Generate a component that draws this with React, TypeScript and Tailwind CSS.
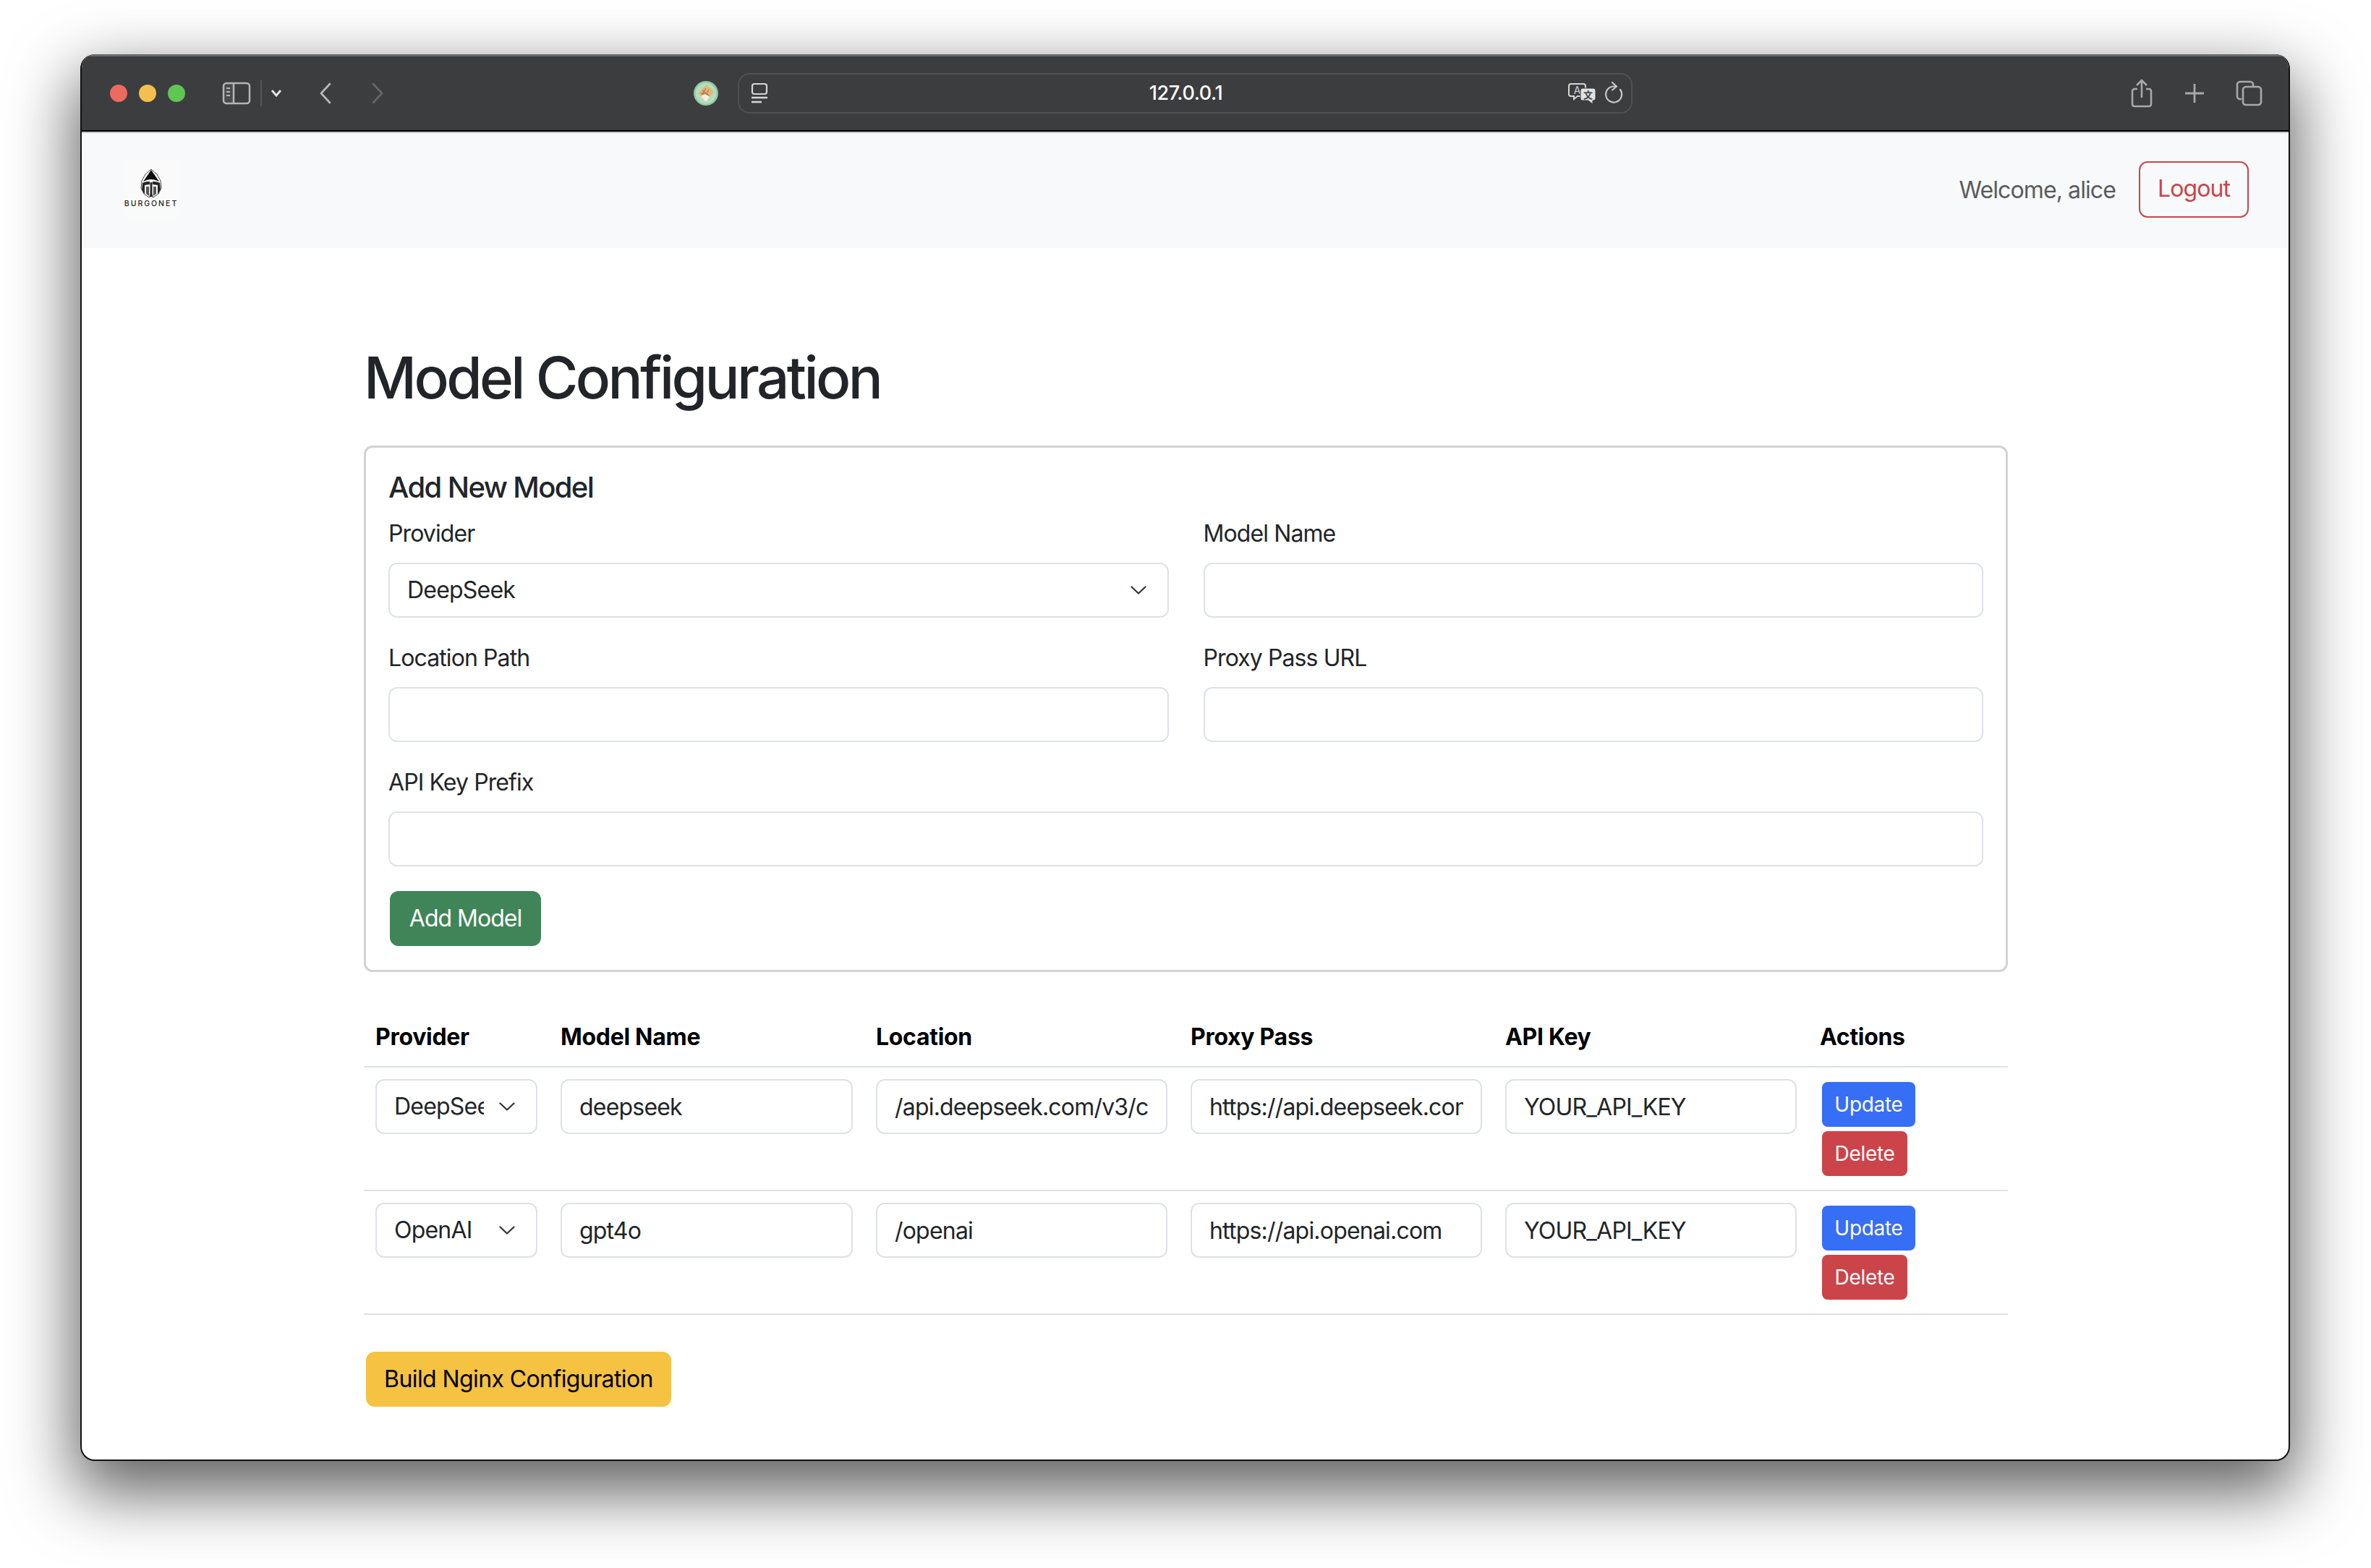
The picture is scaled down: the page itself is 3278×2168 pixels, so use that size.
const font = "font-['Inter','Liberation_Sans',sans-serif]";

function ToolbarIcons() {
  return (
    <>
      <svg width="42" height="34" viewBox="0 0 42 34" fill="none" className="ml-[50px]">
        <rect x="3" y="3" width="36" height="28" rx="4" stroke="#b5b5b6" strokeWidth="2.5" />
        <rect x="3" y="3" width="14" height="28" fill="#b5b5b6" fillOpacity="0.12" />
        <path d="M17 3v28" stroke="#b5b5b6" strokeWidth="2.5" />
        <path d="M7 10h5M7 15h5M7 20h5" stroke="#b5b5b6" strokeWidth="2" />
      </svg>
      <div className="ml-[12px] h-[36px] w-[2px] bg-[#55565a]" />
      <svg width="18" height="12" viewBox="0 0 18 12" fill="none" className="ml-[11px]">
        <path d="M3 2l6 7 6-7" stroke="#e4e4e4" strokeWidth="2.8" />
      </svg>
      <svg width="20" height="32" viewBox="0 0 20 32" fill="none" className="ml-[49px]">
        <path d="M16 3L4 16l12 13" stroke="#b9b9ba" strokeWidth="2.6" strokeLinecap="round" strokeLinejoin="round" />
      </svg>
      <svg width="20" height="32" viewBox="0 0 20 32" fill="none" className="ml-[52px]">
        <path d="M4 3l12 13L4 29" stroke="#66676a" strokeWidth="2.6" strokeLinecap="round" strokeLinejoin="round" />
      </svg>
    </>
  );
}

function Favicon() {
  return (
    <svg width="36" height="36" viewBox="0 0 36 36" className="ml-[426px] mr-[26px] shrink-0">
      <circle cx="18" cy="18" r="17" fill="#8fc9a0" />
      <circle cx="18" cy="18" r="14.500" fill="#b4dcbf" />
      <path d="M19 6l10 10-11 14L7 18z" fill="#e0b778" />
      <path d="M13 14l9 7M18 11l-5 9M22 13l-5 9M11 18l10 2" stroke="#a67f4d" strokeWidth="1.300" />
      <path d="M11 22l7 8 5-7-6-4z" fill="#f4efe3" />
    </svg>
  );
}

function UrlBar() {
  return (
    <div className="flex h-[56px] w-[1237px] shrink-0 items-center rounded-[16px] border-2 border-[#505154] pl-[15px] pr-[10px]">
      <svg width="26" height="30" viewBox="0 0 26 30" fill="none">
        <rect x="3" y="2" width="20" height="14" rx="3" stroke="#d6d6d6" strokeWidth="2.2" />
        <path d="M2 21h22" stroke="#d6d6d6" strokeWidth="2.4" />
        <path d="M2 27h14" stroke="#d6d6d6" strokeWidth="2.4" />
      </svg>
      <div className="flex-1 pl-[48px] pt-[2px] text-center text-[27px] font-medium tracking-[-0.4px] text-white">127.0.0.1</div>
      <svg width="40" height="30" viewBox="0 0 40 30" fill="none">
        <path d="M4 2h17a3 3 0 0 1 3 3v11a3 3 0 0 1-3 3H13l-5 4v-4H4a3 3 0 0 1-3-3V5a3 3 0 0 1 3-3z" stroke="#d6d6d6" strokeWidth="2" />
        <text x="12.500" y="15.500" textAnchor="middle" fontSize="14" fill="#d6d6d6">A</text>
        <path d="M20 8h15a3 3 0 0 1 3 3v11a3 3 0 0 1-3 3h-1v5l-6-5h-8a3 3 0 0 1-3-3V11a3 3 0 0 1 3-3z" fill="#e2e2e2" stroke="#3c3d3f" strokeWidth="1" />
        <text x="27.500" y="22" textAnchor="middle" fontSize="13" fontWeight="700" fill="#3c3d3f" fontFamily="'Noto Sans CJK SC', sans-serif">文</text>
      </svg>
      <svg width="30" height="32" viewBox="0 0 30 32" fill="none" className="ml-[7px]">
        <path d="M25 11a11 11 0 1 1-9-4.500h2" stroke="#c9c9c9" strokeWidth="2.200" strokeLinecap="round" />
        <path d="M14 1l6 5.500-6 5" stroke="#c9c9c9" strokeWidth="2.200" strokeLinecap="round" strokeLinejoin="round" />
      </svg>
    </div>
  );
}

function RightIcons() {
  return (
    <div className="ml-auto flex items-center pr-[36px]">
      <svg width="34" height="40" viewBox="0 0 34 40" fill="none">
        <path d="M11 14H7a3 3 0 0 0-3 3v18a3 3 0 0 0 3 3h20a3 3 0 0 0 3-3V17a3 3 0 0 0-3-3h-4" stroke="#a9a9aa" strokeWidth="2.6" />
        <path d="M17 26V3M10 9l7-7 7 7" stroke="#a9a9aa" strokeWidth="2.6" />
      </svg>
      <svg width="30" height="30" viewBox="0 0 30 30" fill="none" className="ml-[41px]">
        <path d="M15 2v26M2 15h26" stroke="#a9a9aa" strokeWidth="2.8" />
      </svg>
      <svg width="38" height="36" viewBox="0 0 38 36" fill="none" className="ml-[41px]">
        <path d="M9 26H7a4 4 0 0 1-4-4V6a4 4 0 0 1 4-4h14a4 4 0 0 1 4 4v2" stroke="#a9a9aa" strokeWidth="2.6" />
        <rect x="11" y="9" width="25" height="25" rx="4" stroke="#a9a9aa" strokeWidth="2.6" />
      </svg>
    </div>
  );
}

function Logo() {
  return (
    <div className="flex h-[78px] w-[80px] flex-col items-center bg-[#fafafa] pt-[10px]">
      <svg width="32" height="41" viewBox="0 0 32 41" className="shrink-0">
        <path d="M16 1l8 7 5 9 1 10-4 8-7 5-3-2-3 2-7-5-4-8 1-10 5-9z" fill="none" stroke="#333" strokeWidth="0.900" />
        <path d="M16 2L5 18c4-2 7-3 11-3s7 1 11 3z" fill="#0c0c0c" />
        <path d="M4 20c4-2 7-2 10-2v4L7 23v13l-4-7zM28 20c-4-2-7-2-10-2v4l7 1v13l4-7z" fill="#262626" />
        <path d="M9 25h4v13l-4-3zM23 25h-4v13l4-3z" fill="#555" />
        <path d="M14.500 19v16l-1 4h5l-1-4V19z" fill="#2a2a2a" />
      </svg>
      <div className="mt-[2px] text-[10.500px] font-medium leading-[12px] tracking-[2px] text-[#222]">BURGONET</div>
    </div>
  );
}

function Chevron({ className }: { className: string }) {
  return (
    <svg width="24" height="14" viewBox="0 0 24 14" fill="none" className={`pointer-events-none absolute ${className}`}>
      <path d="M2.500 2.500L12 11.500l9.500-9" stroke="#343a40" strokeWidth="2.400" strokeLinecap="round" strokeLinejoin="round" />
    </svg>
  );
}

function Field({ value = "" }: { value?: string }) {
  return (
    <input
      defaultValue={value}
      className="block h-[76px] w-full rounded-[12px] border-2 border-[#dee2e6] bg-white px-[24px] text-[32px] leading-[48px] tracking-[-0.8px] text-[#212529] outline-none"
    />
  );
}

function ProviderSelect({ value }: { value: string }) {
  return (
    <div className="relative">
      <select
        defaultValue={value}
        className="block h-[76px] w-full appearance-none rounded-[12px] border-2 border-[#dee2e6] bg-white pl-[24px] pr-[72px] text-[32px] leading-[48px] tracking-[-0.8px] text-[#212529] outline-none"
      >
        <option>DeepSeek</option>
        <option>OpenAI</option>
      </select>
      <Chevron className="right-[30px] top-[31px]" />
    </div>
  );
}

function Row({ provider, name, location, proxy }: { provider: string; name: string; location: string; proxy: string }) {
  return (
    <tr>
      <td className="border-b-2 border-[#dee2e6] p-[16px] align-top"><ProviderSelect value={provider} /></td>
      <td className="border-b-2 border-[#dee2e6] p-[16px] align-top"><Field value={name} /></td>
      <td className="border-b-2 border-[#dee2e6] p-[16px] align-top"><Field value={location} /></td>
      <td className="border-b-2 border-[#dee2e6] p-[16px] align-top"><Field value={proxy} /></td>
      <td className="border-b-2 border-[#dee2e6] p-[16px] align-top"><Field value="YOUR_API_KEY" /></td>
      <td className="border-b-2 border-[#dee2e6] p-[16px] align-top">
        <div className="ml-[3px] flex flex-col items-start gap-[6px] pb-[3px] pt-[4px]">
          <button className="h-[62px] w-[129px] rounded-[8px] bg-[#376ef6] text-center text-[28px] tracking-[-0.3px] text-white">Update</button>
          <button className="h-[62px] w-[118px] rounded-[8px] bg-[#cb444a] text-center text-[28px] tracking-[-0.3px] text-white">Delete</button>
        </div>
      </td>
    </tr>
  );
}

export default function App() {
  return (
    <div className={`${font} h-[2168px] overflow-hidden bg-white pl-[111px] pt-[75px]`}>
      <div className="h-[1945px] w-[3055px] overflow-hidden rounded-[20px] border-2 border-t-0 border-[#111] bg-white shadow-[0_36px_90px_8px_rgba(0,0,0,0.62)]">
        <div className="flex h-[107px] items-center border-b-2 border-t-[3px] border-b-black border-t-[#6a6b6d] bg-[#3c3d3f] pb-[1px] pl-[39px]">
          <div className="h-[24px] w-[24px] rounded-full bg-[#ec6a5e]" />
          <div className="ml-[16px] h-[24px] w-[24px] rounded-full bg-[#f4bf4f]" />
          <div className="ml-[16px] h-[24px] w-[24px] rounded-full bg-[#61c554]" />
          <ToolbarIcons />
          <Favicon />
          <UrlBar />
          <RightIcons />
        </div>

        <nav className="flex h-[161px] items-center border-t-2 border-[#c3c5c9] bg-[#f8f9fa] pb-[3px] pl-[56px] pr-[55px]">
          <Logo />
          <span className="ml-auto pt-[2px] text-[32px] tracking-[-0.9px] text-[#595b5d]">Welcome, alice</span>
          <button className="ml-[32px] h-[78px] w-[152px] rounded-[12px] border-2 border-[#cb444a] pb-[3px] text-[32px] tracking-[-0.9px] text-[#cb444a]">Logout</button>
        </nav>

        <main className="ml-[390px] w-[2273px] pt-[131px]">
          <h1 className="text-[80px] font-medium leading-[96px] tracking-[-3.6px] text-[#212529]">Model Configuration</h1>

          <section className="mt-[46px] rounded-[12px] border-[3px] border-[#d1d3d6] p-[31px] pb-[33px]">
            <h5 className="text-[40px] font-medium leading-[48px] tracking-[-1.6px] text-[#212529]">Add New Model</h5>
            <div className="mt-[16px] grid grid-cols-2 gap-x-[48px] gap-y-[32px] text-[32px] leading-[48px] tracking-[-0.9px] text-[#212529]">
              <label className="block">
                <span className="mb-[16px] block">Provider</span>
                <ProviderSelect value="DeepSeek" />
              </label>
              <label className="block">
                <span className="mb-[16px] block">Model Name</span>
                <Field />
              </label>
              <label className="block">
                <span className="mb-[16px] block">Location Path</span>
                <Field />
              </label>
              <label className="block">
                <span className="mb-[16px] block">Proxy Pass URL</span>
                <Field />
              </label>
              <label className="col-span-2 block">
                <span className="mb-[16px] block">API Key Prefix</span>
                <Field />
              </label>
            </div>
            <button className="ml-[2px] mt-[34px] block h-[76px] w-[209px] rounded-[12px] bg-[#3f8558] text-[32px] tracking-[-1px] text-white">Add Model</button>
          </section>

          <table className="mt-[50px] w-full table-fixed border-collapse">
            <colgroup>
              <col className="w-[256px]" />
              <col className="w-[436px]" />
              <col className="w-[435px]" />
              <col className="w-[435px]" />
              <col className="w-[435px]" />
              <col />
            </colgroup>
            <thead>
              <tr className="text-left text-[32px] font-bold leading-[48px] tracking-[-0.3px] text-black">
                <th className="border-b-2 border-[#dee2e6] p-[16px]">Provider</th>
                <th className="border-b-2 border-[#dee2e6] p-[16px]">Model Name</th>
                <th className="border-b-2 border-[#dee2e6] p-[16px]">Location</th>
                <th className="border-b-2 border-[#dee2e6] p-[16px]">Proxy Pass</th>
                <th className="border-b-2 border-[#dee2e6] p-[16px]">API Key</th>
                <th className="border-b-2 border-[#dee2e6] p-[16px]">Actions</th>
              </tr>
            </thead>
            <tbody>
              <Row provider="DeepSeek" name="deepseek" location="/api.deepseek.com/v3/chat/completions" proxy="https://api.deepseek.com/v3/chat" />
              <Row provider="OpenAI" name="gpt4o" location="/openai" proxy="https://api.openai.com" />
            </tbody>
          </table>

          <button className="ml-[3px] mt-[51px] block h-[76px] w-[422px] rounded-[12px] bg-[#f5c242] text-[32px] tracking-[-0.6px] text-black">Build Nginx Configuration</button>
        </main>
      </div>
    </div>
  );
}
